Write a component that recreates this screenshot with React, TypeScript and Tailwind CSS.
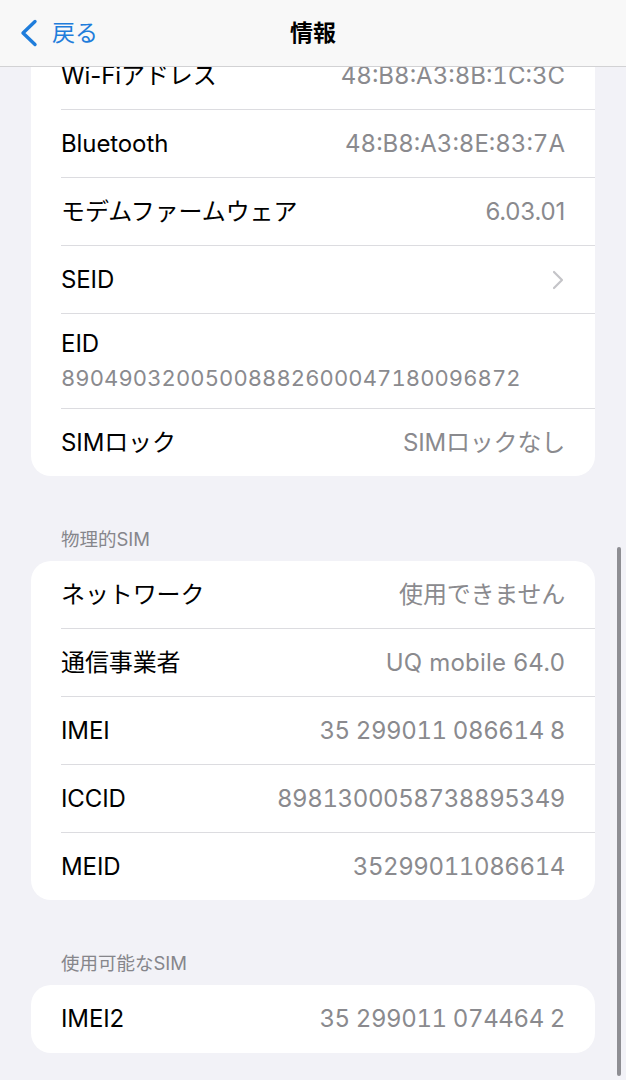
import React from "react";

const FONT = { fontFamily: '"Inter", "Noto Sans CJK JP", sans-serif' };

type RowProps = {
  label: string;
  value?: string;
  chevron?: boolean;
  last?: boolean;
  h?: string;
  vc?: string;
};

function Row({ label, value, chevron, last, h, vc }: RowProps) {
  return (
    <div className="pl-[30px]">
      <div
        className={`flex ${h ?? "h-[68px]"} items-center justify-between pr-[30px] ${last ? "" : "border-b border-[#dcdce0]"}`}
      >
        <span className="text-[24px] text-black tracking-[-0.1px]">{label}</span>
        {value && (
          <span className={`text-[24px] text-[#8a8a8e] ${vc ?? "tracking-[-0.2px]"}`}>{value}</span>
        )}
        {chevron && (
          <svg width="12" height="20" viewBox="0 0 12 20" className="mr-[1px]">
            <polyline
              points="2,2 10,10 2,18"
              fill="none"
              stroke="#c4c4c8"
              strokeWidth="2.2"
              strokeLinecap="round"
              strokeLinejoin="round"
            />
          </svg>
        )}
      </div>
    </div>
  );
}

function Card({ children }: { children: React.ReactNode }) {
  return <div className="mx-[31px] overflow-hidden rounded-[20px] bg-white">{children}</div>;
}

function SectionHeader({ text }: { text: string }) {
  return (
    <div className="px-[61px] pb-[10px] pt-[51px] text-[18.5px] leading-[24px] text-[#86868b]">{text}</div>
  );
}

const MAC = "tabular-nums tracking-[0px]";
const NUM = "tabular-nums tracking-[-0.4px]";

export default function App() {
  return (
    <div className="relative h-[1080px] w-[626px] overflow-hidden bg-[#f2f2f7]" style={FONT}>
      <div className="pt-[42px]">
        <Card>
          <Row label="Wi-Fiアドレス" value="48:B8:A3:8B:1C:3C" vc={MAC} />
          <Row label="Bluetooth" value="48:B8:A3:8E:83:7A" vc={MAC} />
          <Row label="モデムファームウェア" value="6.03.01" />
          <Row label="SEID" chevron />
          <div className="pl-[30px]">
            <div className="flex h-[95px] flex-col justify-center border-b border-[#dcdce0] pr-[30px]">
              <span className="text-[24px] leading-[32px] text-black">EID</span>
              <span className="mt-[2px] text-[22px] leading-[32px] tabular-nums text-[#8a8a8e] tracking-[0.1px]">
                89049032005008882600047180096872
              </span>
            </div>
          </div>
          <Row label="SIMロック" value="SIMロックなし" last h="h-[67px]" />
        </Card>

        <SectionHeader text="物理的SIM" />
        <Card>
          <Row label="ネットワーク" value="使用できません" />
          <Row label="通信事業者" value="UQ mobile 64.0" vc="tracking-[0.2px]" />
          <Row label="IMEI" value="35 299011 086614 8" vc={NUM} />
          <Row label="ICCID" value="8981300058738895349" vc={NUM} />
          <Row label="MEID" value="35299011086614" last h="h-[67px]" vc={NUM} />
        </Card>

        <SectionHeader text="使用可能なSIM" />
        <Card>
          <Row label="IMEI2" value="35 299011 074464 2" last vc={NUM} />
        </Card>
      </div>

      {/* Navigation bar overlay */}
      <div className="absolute left-0 top-0 flex h-[67px] w-full items-center border-b border-[#d2d2d4] bg-[#f8f8f8]">
        <div className="flex items-center pl-[20px]">
          <svg width="18" height="28" viewBox="0 0 18 28">
            <polyline
              points="15,2.5 3,14 15,25.5"
              fill="none"
              stroke="#1f7ddb"
              strokeWidth="3.4"
              strokeLinecap="round"
              strokeLinejoin="round"
            />
          </svg>
          <span className="ml-[14px] text-[23px] text-[#1f7ddb]">戻る</span>
        </div>
        <div className="absolute left-0 right-0 text-center text-[23px] font-bold text-black">情報</div>
      </div>

      {/* Scroll indicator */}
      <div className="absolute left-[617px] top-[547px] h-[529px] w-[4px] rounded-full bg-[#8e8e93]" />
    </div>
  );
}
